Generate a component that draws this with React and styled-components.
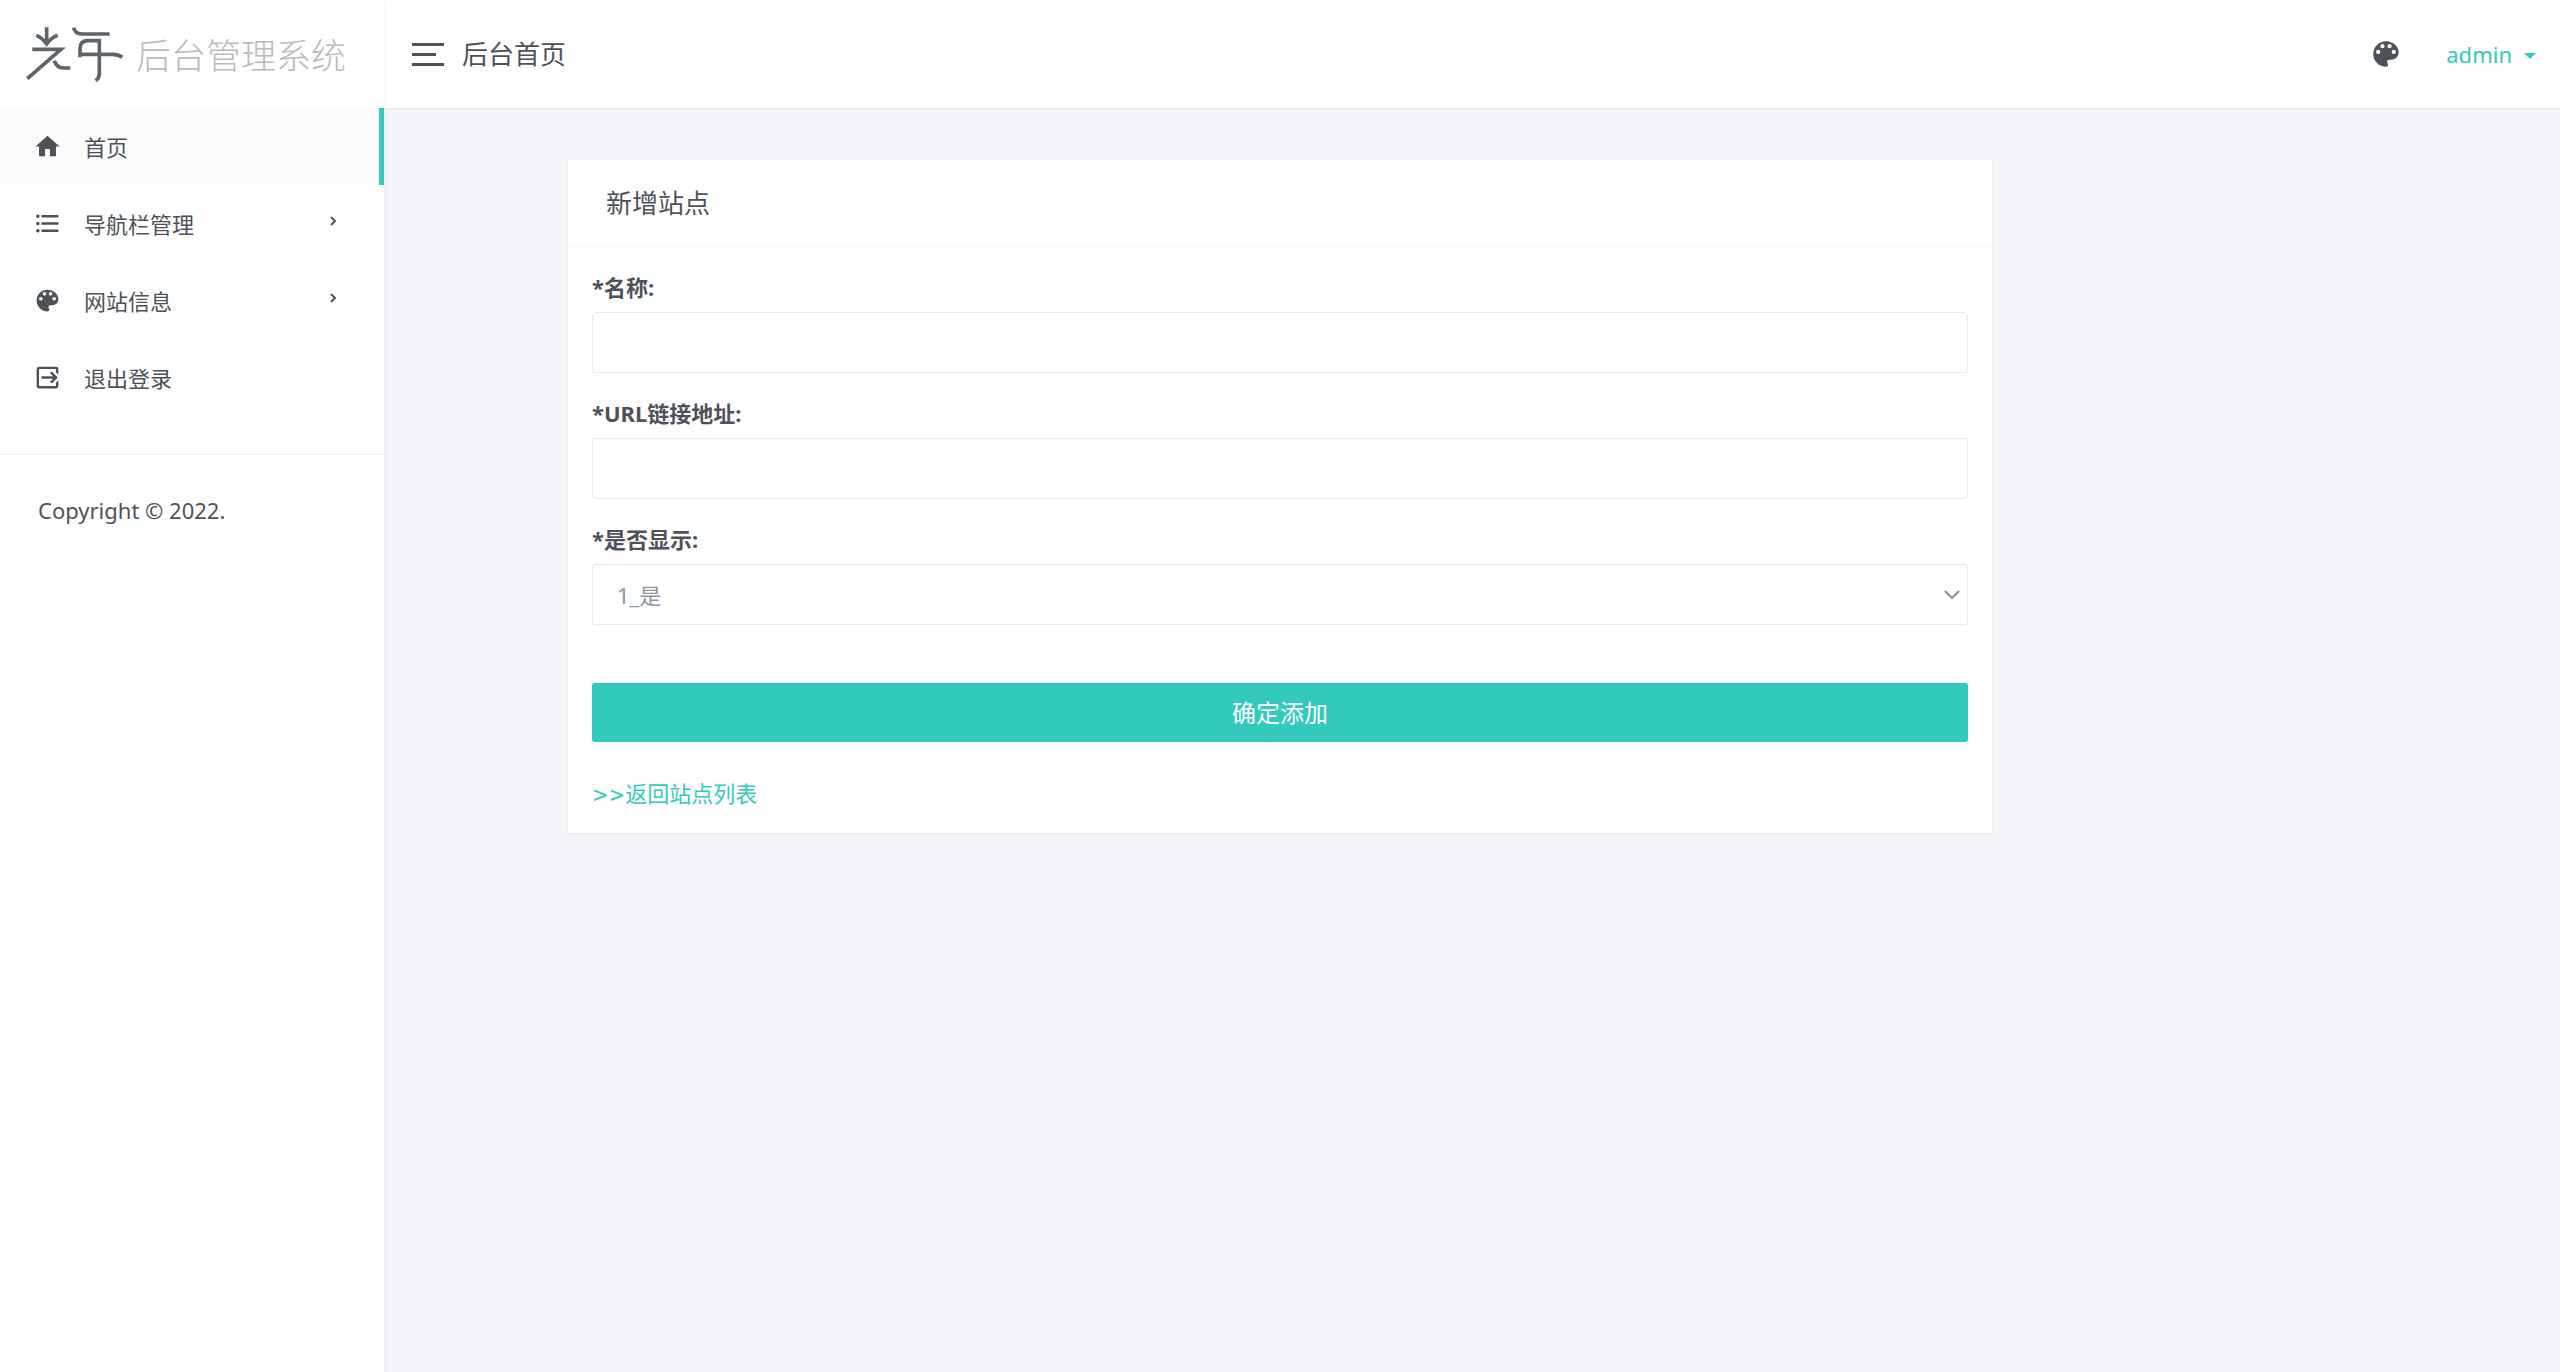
import React from "react";
import styled, { createGlobalStyle } from "styled-components";

const teal = "#33cabb";
const ink = "#4d5259";

const GlobalStyle = createGlobalStyle`
  *, *::before, *::after { box-sizing: border-box; }
  body {
    margin: 0;
    background: #f3f5f9;
    color: ${ink};
    font-family: "Noto Sans", "Noto Sans CJK SC", sans-serif;
    font-size: 22px;
    line-height: 34px;
  }
  a { color: inherit; text-decoration: none; }
  button, input, select { font: inherit; }
`;

const Shell = styled.div`
  display: grid;
  grid-template-columns: 384px 1fr;
  min-height: 100vh;
`;

const Sidebar = styled.aside`
  position: relative;
  background: #fff;
  box-shadow: 0 0 6px rgba(0, 0, 0, 0.06);
`;

const Brand = styled.a`
  display: flex;
  align-items: center;
  gap: 11px;
  height: 108px;
  padding-left: 25px;
  box-shadow: 0 1px 2px rgba(0, 0, 0, 0.05);
`;

const LogoMark = styled.svg`
  width: 100px;
  height: 56px;
  fill: none;
  stroke: #5d646a;
  stroke-width: 11;
`;

const BrandName = styled.span`
  padding-top: 4px;
  color: #b9bbbd;
  font-size: 35px;
  font-weight: 300;
  line-height: 52px;
`;

const NavItem = styled.a`
  display: flex;
  align-items: center;
  gap: 22px;
  height: 77px;
  padding: 0 47px 0 33px;
  background: ${(p) => (p.$active ? "#fbfbfc" : "transparent")};
  box-shadow: ${(p) => (p.$active ? `inset -5px 0 ${teal}` : "none")};
`;

const NavLabel = styled.span`
  flex: 1;
`;

const Icon = styled.svg`
  width: ${(p) => p.$size}px;
  height: ${(p) => p.$size}px;
  fill: currentColor;
  flex: none;
`;

const Chevron = styled.svg`
  width: 7px;
  height: 10px;
  margin-bottom: 5px;
  fill: none;
  stroke: currentColor;
  stroke-width: 2;
`;

const Copyright = styled.p`
  margin: 38px 0 0;
  padding: 38px;
  border-top: 1px solid #f3f4f5;
`;

const Topbar = styled.header`
  display: flex;
  align-items: center;
  height: 108px;
  padding: 0 24px 0 28px;
  background: #fff;
  box-shadow: 0 1px 3px rgba(0, 0, 0, 0.06);
`;

const MenuButton = styled.button`
  display: flex;
  flex-direction: column;
  gap: 7px;
  width: 32px;
  padding: 0;
  border: 0;
  background: none;
`;

const Bar = styled.span`
  width: ${(p) => (p.$short ? 24 : 32)}px;
  height: 3px;
  background: ${ink};
`;

const PageName = styled.span`
  flex: 1;
  margin-left: 18px;
  font-size: 26px;
`;

const IconButton = styled.button`
  display: flex;
  padding: 0;
  margin-right: 43px;
  border: 0;
  background: none;
  color: ${ink};
`;

const UserButton = styled.button`
  display: flex;
  align-items: center;
  gap: 12px;
  padding: 0;
  border: 0;
  background: none;
  color: ${teal};
`;

const Caret = styled.span`
  margin-top: 4px;
  border: 6px solid transparent;
  border-top-color: currentColor;
  border-bottom: 0;
`;

const Content = styled.main`
  display: grid;
  grid-template-columns: 10fr 89fr 34fr;
  padding: 52px 24px;
`;

const Card = styled.section`
  grid-column: 2;
  background: #fff;
  box-shadow: 0 1px 4px rgba(0, 0, 0, 0.06);
`;

const CardTitle = styled.h1`
  margin: 0;
  padding: 26px 38px;
  border-bottom: 1px solid #f5f6f7;
  font-size: 26px;
  font-weight: 400;
`;

const Form = styled.form`
  padding: 23px 24px;
`;

const Field = styled.div`
  margin-bottom: 23px;
`;

const Label = styled.label`
  display: block;
  margin-bottom: 8px;
  font-weight: 700;
`;

const TextInput = styled.input`
  display: block;
  width: 100%;
  height: 61px;
  padding: 0 24px;
  border: 1px solid #ebebeb;
  border-radius: 3px;
  background: #fff;
  color: #8b95a5;
`;

const SelectWrap = styled.div`
  display: grid;
  align-items: center;

  > * { grid-area: 1 / 1; }
`;

const Select = styled(TextInput).attrs({ as: "select" })`
  appearance: none;
`;

const SelectArrow = styled.svg`
  justify-self: end;
  width: 16px;
  height: 10px;
  margin-right: 8px;
  fill: none;
  stroke: #8f9297;
  stroke-width: 2;
  pointer-events: none;
`;

const Submit = styled.button`
  display: block;
  width: 100%;
  height: 59px;
  margin-top: 58px;
  border: 0;
  border-radius: 3px;
  background: ${teal};
  color: #fff;
  font-size: 24px;
`;

const BackLink = styled.a`
  display: block;
  width: fit-content;
  margin-top: 34px;
  color: ${teal};
`;

const Arrows = styled.span`
  font-family: "DejaVu Sans Condensed", "DejaVu Sans", sans-serif;
  line-height: 1;
`;

const icons = {
  home: "M10,20V14H14V20H19V12H22L12,3L2,12H5V20H10Z",
  list: "M7,5H21V7H7V5M7,13V11H21V13H7M4,4.5A1.5,1.5 0 0,1 5.5,6A1.5,1.5 0 0,1 4,7.5A1.5,1.5 0 0,1 2.5,6A1.5,1.5 0 0,1 4,4.5M4,10.5A1.5,1.5 0 0,1 5.5,12A1.5,1.5 0 0,1 4,13.5A1.5,1.5 0 0,1 2.5,12A1.5,1.5 0 0,1 4,10.5M7,19V17H21V19H7M4,16.5A1.5,1.5 0 0,1 5.5,18A1.5,1.5 0 0,1 4,19.5A1.5,1.5 0 0,1 2.5,18A1.5,1.5 0 0,1 4,16.5Z",
  palette: "M17.5,12A1.5,1.5 0 0,1 16,10.5A1.5,1.5 0 0,1 17.5,9A1.5,1.5 0 0,1 19,10.5A1.5,1.5 0 0,1 17.5,12M14.5,8A1.5,1.5 0 0,1 13,6.5A1.5,1.5 0 0,1 14.5,5A1.5,1.5 0 0,1 16,6.5A1.5,1.5 0 0,1 14.5,8M9.5,8A1.5,1.5 0 0,1 8,6.5A1.5,1.5 0 0,1 9.5,5A1.5,1.5 0 0,1 11,6.5A1.5,1.5 0 0,1 9.5,8M6.5,12A1.5,1.5 0 0,1 5,10.5A1.5,1.5 0 0,1 6.5,9A1.5,1.5 0 0,1 8,10.5A1.5,1.5 0 0,1 6.5,12M12,3A9,9 0 0,0 3,12A9,9 0 0,0 12,21A1.5,1.5 0 0,0 13.5,19.5C13.5,19.11 13.35,18.76 13.11,18.5C12.88,18.23 12.73,17.88 12.73,17.5A1.5,1.5 0 0,1 14.23,16H16A5,5 0 0,0 21,11C21,6.58 16.97,3 12,3Z",
  logout: "M14.08,15.59L16.67,13H7V11H16.67L14.08,8.41L15.5,7L20.5,12L15.5,17L14.08,15.59M19,3A2,2 0 0,1 21,5V9.67L19,7.67V5H5V19H19V16.33L21,14.33V19A2,2 0 0,1 19,21H5C3.89,21 3,20.1 3,19V5C3,3.89 3.89,3 5,3H19Z",
};

function Glyph({ name, size = 29 }) {
  return (
    <Icon $size={size} viewBox="0 0 24 24" aria-hidden="true">
      <path d={icons[name]} />
    </Icon>
  );
}

const navigation = [
  { icon: "home", label: "首页", active: true },
  { icon: "list", label: "导航栏管理", nested: true },
  { icon: "palette", label: "网站信息", nested: true },
  { icon: "logout", label: "退出登录" },
];

export default function App() {
  return (
    <>
      <GlobalStyle />
      <Shell>
        <Sidebar>
          <Brand href="#">
            <LogoMark viewBox="75 78 300 168" aria-hidden="true">
              <path d="M140 82V130M109 106Q126 113 140 132Q154 113 173 106M97 148H183L82 236M163 182Q170 204 190 204H211" />
              <path d="M221 83Q225 102 246 102H329M240 172V146Q240 122 264 122H298V222Q298 234 287 242M240 163H338Q355 163 367 172" />
            </LogoMark>
            <BrandName>后台管理系统</BrandName>
          </Brand>
          <nav>
            {navigation.map((item) => (
              <NavItem key={item.label} href="#" $active={item.active}>
                <Glyph name={item.icon} />
                <NavLabel>{item.label}</NavLabel>
                {item.nested && (
                  <Chevron viewBox="0 0 7 10" aria-hidden="true">
                    <path d="M1 1L5 5L1 9" />
                  </Chevron>
                )}
              </NavItem>
            ))}
          </nav>
          <Copyright>Copyright © 2022.</Copyright>
        </Sidebar>
        <div>
          <Topbar>
            <MenuButton type="button" aria-label="菜单">
              <Bar />
              <Bar $short />
              <Bar />
            </MenuButton>
            <PageName>后台首页</PageName>
            <IconButton type="button" aria-label="主题">
              <Glyph name="palette" size={34} />
            </IconButton>
            <UserButton type="button">
              admin
              <Caret />
            </UserButton>
          </Topbar>
          <Content>
            <Card>
              <CardTitle>新增站点</CardTitle>
              <Form>
                <Field>
                  <Label htmlFor="site-name">*名称:</Label>
                  <TextInput id="site-name" type="text" />
                </Field>
                <Field>
                  <Label htmlFor="site-url">*URL链接地址:</Label>
                  <TextInput id="site-url" type="text" />
                </Field>
                <Field>
                  <Label htmlFor="site-visible">*是否显示:</Label>
                  <SelectWrap>
                    <Select id="site-visible">
                      <option>1_是</option>
                    </Select>
                    <SelectArrow viewBox="0 0 16 10" aria-hidden="true">
                      <path d="M1 1L8 8L15 1" />
                    </SelectArrow>
                  </SelectWrap>
                </Field>
                <Submit type="submit">确定添加</Submit>
                <BackLink href="#">
                  <Arrows>&gt;&gt;</Arrows>返回站点列表
                </BackLink>
              </Form>
            </Card>
          </Content>
        </div>
      </Shell>
    </>
  );
}
